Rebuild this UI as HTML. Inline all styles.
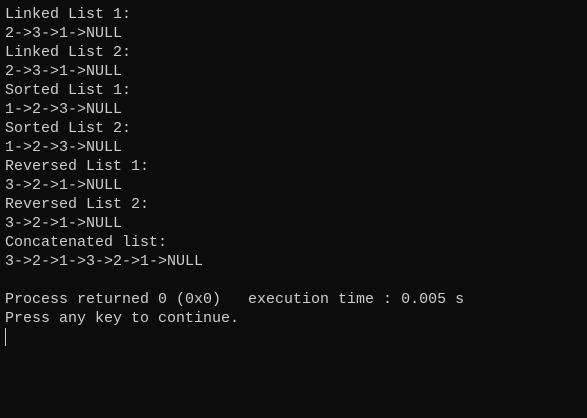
<html><head><style>
body{margin:0;background:#0c0c0c;width:587px;height:418px;overflow:hidden}
pre{margin:0;padding:5px 0 0 5px;font-family:"Liberation Mono",monospace;font-size:15px;line-height:19px;color:#cccccc}
.c{display:inline-block;width:1px;height:18px;background:#ccc;vertical-align:-4px}
</style></head><body><pre>Linked List 1:
2->3->1->NULL
Linked List 2:
2->3->1->NULL
Sorted List 1:
1->2->3->NULL
Sorted List 2:
1->2->3->NULL
Reversed List 1:
3->2->1->NULL
Reversed List 2:
3->2->1->NULL
Concatenated list:
3->2->1->3->2->1->NULL

Process returned 0 (0x0)   execution time : 0.005 s
Press any key to continue.
<span class="c"></span></pre></body></html>
